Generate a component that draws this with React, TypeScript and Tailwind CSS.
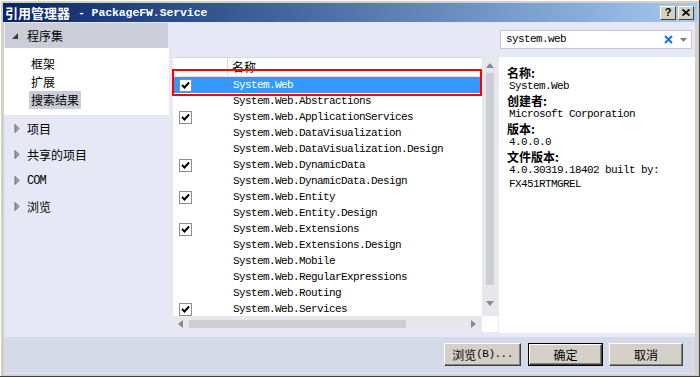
import React from "react";

const cjk = "font-['Noto_Sans_CJK_SC',sans-serif]";
const mono = "font-['Liberation_Mono','Noto_Sans_CJK_SC',monospace] text-[11px] tracking-[-0.6px]";

interface Assembly {
  name: string;
  checked: boolean;
}

const assemblies: Assembly[] = [
  { name: "System.Web", checked: true },
  { name: "System.Web.Abstractions", checked: false },
  { name: "System.Web.ApplicationServices", checked: true },
  { name: "System.Web.DataVisualization", checked: false },
  { name: "System.Web.DataVisualization.Design", checked: false },
  { name: "System.Web.DynamicData", checked: true },
  { name: "System.Web.DynamicData.Design", checked: false },
  { name: "System.Web.Entity", checked: true },
  { name: "System.Web.Entity.Design", checked: false },
  { name: "System.Web.Extensions", checked: true },
  { name: "System.Web.Extensions.Design", checked: false },
  { name: "System.Web.Mobile", checked: false },
  { name: "System.Web.RegularExpressions", checked: false },
  { name: "System.Web.Routing", checked: false },
  { name: "System.Web.Services", checked: true },
];

function CheckBox() {
  return (
    <div className="w-[13px] h-[13px] border border-[#8c8c8c] bg-white flex items-center justify-center">
      <svg width="9" height="8" viewBox="0 0 9 8">
        <path d="M1 4 L3.5 6.5 L8 1.5" stroke="#000" strokeWidth="2" fill="none" />
      </svg>
    </div>
  );
}

function Collapsed() {
  return (
    <svg width="6" height="9" viewBox="0 0 6 9">
      <polygon points="1,0.5 5,4.5 1,8.5" fill="#9a9ca6" stroke="#6d6f7a" strokeWidth="1" />
    </svg>
  );
}

function Win98Button({
  children,
  width,
  isDefault = false,
}: {
  children: React.ReactNode;
  width: string;
  isDefault?: boolean;
}) {
  return (
    <div className={`${width} h-[23px] ${isDefault ? "border border-black" : ""}`}>
      <div className="w-full h-full bg-[#d4d0c8] border-t border-l border-t-white border-l-white border-r border-b border-r-[#404040] border-b-[#404040] shadow-[inset_-1px_-1px_0_#808080] flex items-center justify-center text-[12px] text-black">
        {children}
      </div>
    </div>
  );
}

export default function App() {
  const navItems = ["项目", "共享的项目", "COM", "浏览"];

  return (
    <div className="w-[700px] h-[377px] bg-[#d4d0c8] p-[3px] flex flex-col shadow-[inset_-1px_-1px_0_#404040,inset_1px_1px_0_#ffffff] overflow-hidden">
      {/* title bar */}
      <div className="h-[19px] shrink-0 bg-linear-to-r from-[#0a246a] to-[#a6caf0] flex items-center pl-[2px] pr-[3px]">
        <span className={`text-white font-bold text-[13px] ${cjk}`}>引用管理器</span>
        <span className="text-white font-bold text-[11.5px] font-['Liberation_Mono',monospace] ml-[8px] tracking-[-0.1px] whitespace-pre">
          - PackageFW.Service
        </span>
        <div className="ml-auto flex gap-[2px]">
          <div className="w-[16px] h-[14px] bg-[#d4d0c8] border-t border-l border-white border-r border-b border-r-[#404040] border-b-[#404040] flex items-center justify-center text-[11px] font-bold leading-none font-['Liberation_Sans',sans-serif]">
            ?
          </div>
          <div className="w-[16px] h-[14px] bg-[#d4d0c8] border-t border-l border-white border-r border-b border-r-[#404040] border-b-[#404040] flex items-center justify-center">
            <svg width="8" height="7" viewBox="0 0 8 7">
              <path d="M0.5 0.5 L7.5 6.5 M7.5 0.5 L0.5 6.5" stroke="#000" strokeWidth="1.6" />
            </svg>
          </div>
        </div>
      </div>

      {/* body */}
      <div className="flex-1 ml-[1px] mr-[2px] bg-[#e6e9f5] flex flex-col">
        <div className="flex h-[315px]">
          {/* left nav */}
          <div className={`w-[168px] shrink-0 text-[12px] text-black ${cjk}`}>
            <div className="mt-[1px] ml-[1px] w-[163px] h-[25px] bg-[#cbcdd9] flex items-center">
              <svg width="6" height="6" viewBox="0 0 6 6" className="ml-[7px]">
                <polygon points="6,0 6,6 0,6" fill="#3c3c3c" />
              </svg>
              <span className="ml-[9px]">程序集</span>
            </div>
            <div className="w-[165px] h-[67px] bg-white pt-[7px]">
              <div className="h-[18px] leading-[18px] pl-[27px]">框架</div>
              <div className="h-[18px] leading-[18px] pl-[27px]">扩展</div>
              <div className="h-[18px] leading-[18px] ml-[25px] pl-[2px] w-[52px] bg-[#cbcdd9]">搜索结果</div>
            </div>
            {navItems.map((n) => (
              <div key={n} className="h-[26px] flex items-center pl-[10px] pt-[1px]">
                <Collapsed />
                <span className={`ml-[7px] ${n === "COM" ? "font-['Liberation_Mono',monospace] text-[12px] tracking-[-1px]" : ""}`}>
                  {n}
                </span>
              </div>
            ))}
          </div>

          {/* right side */}
          <div className="flex-1 flex flex-col">
            <div className="h-[35px] flex justify-end pt-[8px] pr-[3px]">
              <div className="w-[192px] h-[19px] bg-white border border-[#c3c7d5] flex items-center pl-[5px] pr-[4px]">
                <span className={`${mono} text-black`}>system.web</span>
                <svg width="9" height="9" viewBox="0 0 9 9" className="ml-auto">
                  <path d="M1 1 L8 8 M8 1 L1 8" stroke="#1c72d0" strokeWidth="2" />
                </svg>
                <svg width="7" height="4" viewBox="0 0 7 4" className="ml-[7px]">
                  <polygon points="0,0 7,0 3.5,4" fill="#7c7f8c" />
                </svg>
              </div>
            </div>

            <div className="flex flex-1">
              {/* list block */}
              <div className="ml-[1px] w-[325px] flex flex-col">
                <div className="flex h-[259px]">
                  <div className="relative w-[309px] bg-white">
                    <div className="h-[20px] flex border-t border-[#d8d8dc] border-b border-b-[#e4e4e8]">
                      <div className="w-[55px] border-r border-[#d8d8dc]" />
                      <div className={`pl-[4px] text-[12px] leading-[18px] ${cjk}`}>名称</div>
                    </div>
                    {assemblies.map((a, i) => (
                      <div
                        key={a.name}
                        className={`h-[16px] flex items-center ${i === 0 ? "bg-[#3399ff] text-white" : "text-black"}`}
                      >
                        <div className="w-[60px] pl-[6px]">{a.checked && <CheckBox />}</div>
                        <span className={mono}>{a.name}</span>
                      </div>
                    ))}
                    <div className="absolute left-[-1px] top-[12px] w-[310px] h-[27px] border-2 border-[#ff0000]" />
                  </div>
                  {/* vertical scrollbar */}
                  <div className="w-[16px] bg-[#e8e8ec] flex flex-col items-center">
                    <svg width="8" height="5" viewBox="0 0 8 5" className="mt-[6px]">
                      <polygon points="4,0 8,5 0,5" fill="#868999" />
                    </svg>
                    <div className="mt-[5px] w-[8px] h-[212px] bg-[#cdced4]" />
                    <svg width="8" height="5" viewBox="0 0 8 5" className="mt-auto mb-[10px]">
                      <polygon points="0,0 8,0 4,5" fill="#868999" />
                    </svg>
                  </div>
                </div>
                <div className="flex h-[16px]">
                  <div className="w-[309px] bg-[#e8e8ec] flex items-center">
                    <svg width="5" height="8" viewBox="0 0 5 8" className="ml-[5px]">
                      <polygon points="5,0 5,8 0,4" fill="#868999" />
                    </svg>
                    <div className="ml-[6px] w-[217px] h-[8px] bg-[#cdced4]" />
                    <svg width="5" height="8" viewBox="0 0 5 8" className="ml-auto mr-[6px]">
                      <polygon points="0,0 5,4 0,8" fill="#868999" />
                    </svg>
                  </div>
                  <div className="w-[16px] bg-white" />
                </div>
              </div>

              {/* details panel */}
              <div className="ml-[1px] flex-1 h-[276px] bg-white pt-[9px] pl-[8px] text-black">
                <div className={`h-[14px] leading-[14px] text-[12px] font-bold ${cjk}`}>名称:</div>
                <div className={`h-[14px] leading-[12px] pl-[2px] ${mono}`}>System.Web</div>
                <div className={`h-[14px] leading-[14px] text-[12px] font-bold ${cjk}`}>创建者:</div>
                <div className={`h-[14px] leading-[12px] pl-[2px] ${mono}`}>Microsoft Corporation</div>
                <div className={`h-[14px] leading-[14px] text-[12px] font-bold ${cjk}`}>版本:</div>
                <div className={`h-[14px] leading-[12px] pl-[2px] ${mono}`}>4.0.0.0</div>
                <div className={`h-[14px] leading-[14px] text-[12px] font-bold ${cjk}`}>文件版本:</div>
                <div className={`h-[14px] leading-[12px] pl-[2px] ${mono}`}>4.0.30319.18402 built by:</div>
                <div className={`h-[14px] leading-[12px] pl-[2px] ${mono}`}>FX451RTMGREL</div>
              </div>
            </div>
          </div>
        </div>

        {/* bottom buttons */}
        <div className={`h-[36px] bg-[#d5dae8] flex justify-end items-start pt-[6px] pr-[12px] ${cjk}`}>
          <Win98Button width="w-[77px]">
            浏览<span className="font-['Liberation_Mono',monospace] text-[11px] tracking-[-0.5px]">(B)...</span>
          </Win98Button>
          <div className="w-[7px]" />
          <Win98Button width="w-[75px]" isDefault>
            确定
          </Win98Button>
          <div className="w-[6px]" />
          <Win98Button width="w-[74px]">取消</Win98Button>
        </div>
      </div>
    </div>
  );
}
